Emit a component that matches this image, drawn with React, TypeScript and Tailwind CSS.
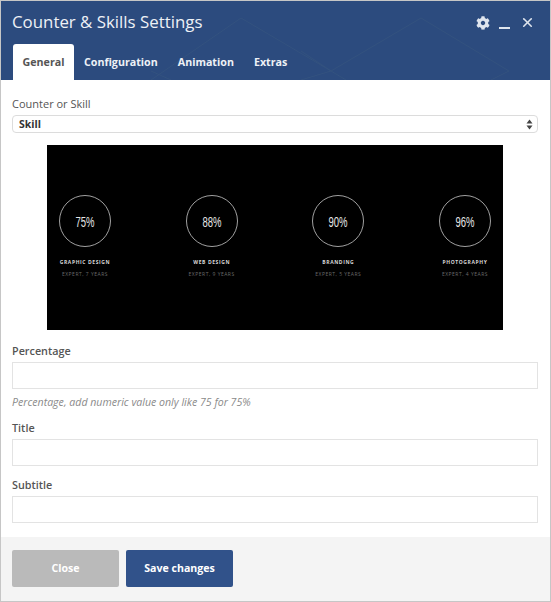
import { X } from 'lucide-react'
import { FaCog } from 'react-icons/fa'

const skills = [
  { value: '75%', title: 'GRAPHIC DESIGN', sub: 'EXPERT, 7 YEARS' },
  { value: '88%', title: 'WEB DESIGN', sub: 'EXPERT, 9 YEARS' },
  { value: '90%', title: 'BRANDING', sub: 'EXPERT, 5 YEARS' },
  { value: '96%', title: 'PHOTOGRAPHY', sub: 'EXPERT, 4 YEARS' },
]

function Field({ label }: { label: string }) {
  return (
    <div>
      <label className="block text-[10.8px] leading-4 font-semibold text-[#555]">{label}</label>
      <input className="mt-[3px] block h-[27px] w-full border border-[#e3e3e3] bg-white" />
    </div>
  )
}

export default function App() {
  return (
    <div className="flex h-[602px] w-[551px] flex-col border border-[#c6c6c6] bg-white font-['Open_Sans',sans-serif]">
      <header className="relative h-[79px] shrink-0 overflow-hidden bg-[#2c4b7e]">
        {/* faint geometric pattern behind the title */}
        <svg className="absolute inset-0" width="549" height="79" fill="none" stroke="#33527f" strokeWidth="1">
          <path d="M150 79 L240 17 L330 70 L300 79 M330 70 L420 17 L508 70 L490 79 M330 70 L345 79 M150 70 L170 79 M300 50 L330 70" />
        </svg>
        <div className="relative flex h-[43px] items-center justify-between pr-[15px] pl-[11px]">
          <h1 className="text-[16.85px] leading-none text-[#eef1f6]">Counter &amp; Skills Settings</h1>
          <div className="flex items-center text-[#dfe5ee]">
            <FaCog size={14} />
            <span className="mt-[11px] ml-[9px] h-[1.5px] w-[11px] bg-[#dfe5ee]" />
            <X size={15} strokeWidth={2.6} className="ml-[10px]" />
          </div>
        </div>
        <nav className="relative flex items-end pl-[12px] text-[10.7px] font-bold">
          <span className="flex h-[36px] w-[61px] items-center justify-center rounded-t-[3px] bg-white text-[#555]">General</span>
          <span className="ml-[10px] flex h-[36px] items-center text-[#eef1f6]">Configuration</span>
          <span className="ml-[20px] flex h-[36px] items-center text-[#eef1f6]">Animation</span>
          <span className="ml-[20px] flex h-[36px] items-center text-[#eef1f6]">Extras</span>
        </nav>
      </header>

      <main className="flex-1 pt-[16px] pr-[12px] pl-[11px]">
        <label className="block text-[11px] leading-4 font-medium text-[#555]">Counter or Skill</label>
        <div className="mt-[3px] flex h-[18px] items-center justify-between rounded-[4px] border border-[#dcdcdc] pr-[4px] pl-[6px] text-[10.5px] font-bold text-[#333]">
          <span className="pt-[1px]">Skill</span>
          <svg width="7" height="11" viewBox="0 0 7 11" fill="#444">
            <path d="M3.5 0.5 L6.5 4.5 H0.5 Z M3.5 10.5 L0.5 6.5 H6.5 Z" />
          </svg>
        </div>

        <div className="mx-auto mt-[12px] flex h-[185px] w-[456px] justify-between bg-black pt-[50px]">
          {skills.map((s) => (
            <div key={s.title} className="flex w-[76px] flex-col items-center">
              <div className="flex h-[52px] w-[52px] items-center justify-center rounded-full border border-[#a0a0a0] pt-[3px] font-['Liberation_Sans',sans-serif] text-[14px] text-[#e6e6e6]">
                <span className="inline-block scale-x-[0.68]">{s.value}</span>
              </div>
              <div className="mt-[11px] text-[5px] leading-[8px] font-bold tracking-[0.6px] whitespace-nowrap text-[#d8d8d8]">{s.title}</div>
              <div className="mt-[4px] text-[5px] leading-[8px] tracking-[0.5px] whitespace-nowrap text-[#6a6a6a]">{s.sub}</div>
            </div>
          ))}
        </div>

        <div className="mt-[13px]">
          <Field label="Percentage" />
          <p className="mt-[5px] text-[10.6px] leading-4 text-[#8a8a8a] italic">Percentage, add numeric value only like 75 for 75%</p>
        </div>
        <div className="mt-[10px]">
          <Field label="Title" />
        </div>
        <div className="mt-[11px]">
          <Field label="Subtitle" />
        </div>
      </main>

      <footer className="flex h-[64px] shrink-0 gap-[7px] bg-[#f4f4f4] px-[11px] pt-[13px]">
        <button className="h-[37px] w-[107px] rounded-[2px] bg-[#bababa] text-[10.6px] font-bold text-white">Close</button>
        <button className="h-[37px] w-[107px] rounded-[2px] bg-[#31528a] text-[10.6px] font-bold text-white">Save changes</button>
      </footer>
    </div>
  )
}
